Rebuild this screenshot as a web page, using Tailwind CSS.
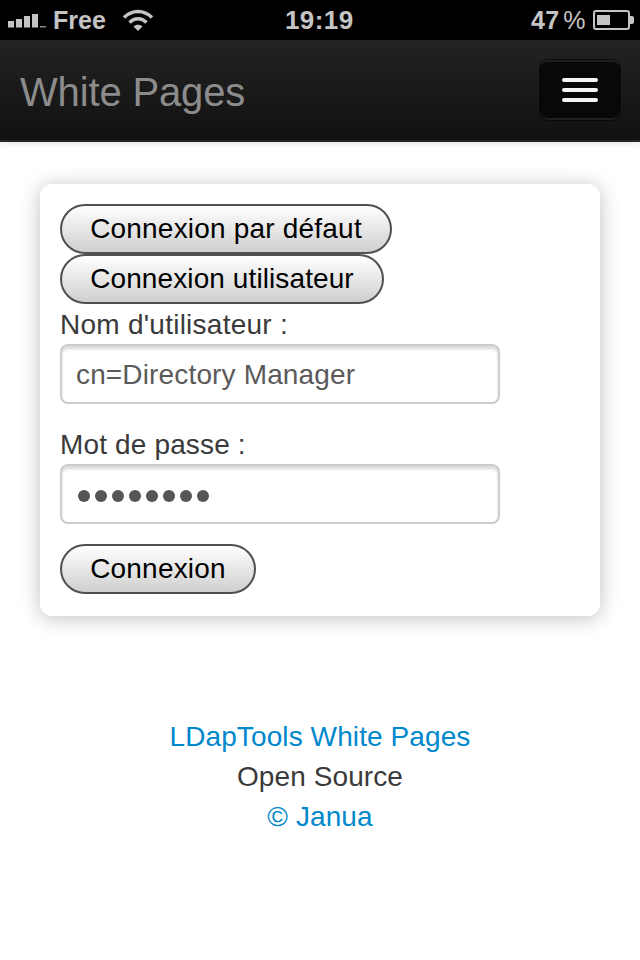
<!DOCTYPE html>
<html lang="fr">
<head>
  <meta charset="UTF-8" />
  <meta name="viewport" content="width=device-width, initial-scale=1.0" />
  <script src="https://cdn.jsdelivr.net/npm/@tailwindcss/browser@4"></script>
  <title>White Pages</title>
</head>
<body class="bg-white text-[#3a3a3a] font-['Liberation_Sans',Arial,sans-serif] text-[28px] leading-[40px] w-[640px] h-[960px] overflow-hidden">

  <!-- iOS status bar -->
  <div class="h-10 bg-black text-[#c4c4c4] font-bold flex items-center relative pl-2 pr-[6px] text-[25px]">
    <svg width="38" height="16" viewBox="0 0 38 16" class="mt-[2px]" fill="#c4c4c4">
      <rect x="0" y="8" width="6" height="6.5" />
      <rect x="8" y="6" width="6" height="8.5" />
      <rect x="16" y="3" width="6" height="11.5" />
      <rect x="24" y="1" width="6" height="13.5" />
      <rect x="32" y="13" width="6" height="1.5" fill="#8a8a8a" />
    </svg>
    <span class="ml-[7px] leading-none">Free</span>
    <svg width="32" height="24" viewBox="0 0 32 24" class="ml-[16px]" fill="none" stroke="#c4c4c4" stroke-width="3.4">
      <path d="M2 9.5 C10 1.5 22 1.5 30 9.5" />
      <path d="M7.5 14.5 C12.5 9.5 19.5 9.5 24.5 14.5" />
      <path d="M16 23 L11.5 18.5 C14 16.3 18 16.3 20.5 18.5 Z" fill="#c4c4c4" stroke="none" />
    </svg>
    <span class="absolute left-[285px] top-[2px] text-[26px] leading-[36px] tracking-[0.4px]">19:19</span>
    <div class="ml-auto flex items-center">
      <span class="leading-none tracking-[0.2px]">47</span>
      <span class="leading-none font-normal ml-[4px] tracking-[-0.5px]">%</span>
      <div class="ml-[8px] w-[37px] h-5 border-2 border-[#c4c4c4] rounded-[3px] pl-[2px] pt-[3px] mt-[-1px]">
        <div class="w-[13px] h-[10px] bg-[#c4c4c4]"></div>
      </div>
      <div class="w-1 h-2 bg-[#c4c4c4] rounded-r-[2px] mt-[-1px]"></div>
    </div>
  </div>

  <!-- Navbar -->
  <div class="h-[102px] bg-gradient-to-b from-[#232323] to-[#111] border-b-2 border-[#252525] shadow-[0_1px_8px_rgba(0,0,0,0.12)] flex items-center justify-between pl-5 pr-5">
    <span class="text-[40px] leading-none text-[#8c8c8c] mt-[4px] tracking-[-0.15px]">White Pages</span>
    <button class="w-20 h-[60px] bg-[#080808] rounded-lg border-t-2 border-t-[#1e1e1e] border-b-2 border-b-[#1f1f1f] shadow-[0_0_0_1px_#0a0a0a] flex flex-col items-center justify-center gap-[6px]">
      <span class="block w-9 h-1 bg-[#f5f5f5] rounded-sm"></span>
      <span class="block w-9 h-1 bg-[#f5f5f5] rounded-sm"></span>
      <span class="block w-9 h-1 bg-[#f5f5f5] rounded-sm"></span>
    </button>
  </div>

  <!-- Login card -->
  <div class="mt-[42px] mx-10 h-[432px] bg-white rounded-xl shadow-[0_2px_20px_rgba(0,0,0,0.25)] p-5">
    <button class="block w-[332px] h-[50px] rounded-[25px] border-2 border-[#505050] bg-gradient-to-b from-white to-[#cfcfcf] text-black leading-none tracking-[0.2px]">Connexion par défaut</button>
    <button class="block w-[324px] h-[50px] rounded-[25px] border-2 border-[#505050] bg-gradient-to-b from-white to-[#cfcfcf] text-black leading-none tracking-[0.1px]">Connexion utilisateur</button>
    <label class="block leading-[40px] pt-[1px] h-10 tracking-[0.25px]">Nom d'utilisateur :</label>
    <div class="w-[440px] h-[60px] border-2 border-[#ccc] rounded-lg shadow-[inset_0_3px_3px_rgba(0,0,0,0.15)] px-[14px] pt-[2px] flex items-center text-[#5a5a5a] tracking-[0.15px]">cn=Directory Manager</div>
    <label class="block leading-[40px] mt-5 pt-[1px] h-10 tracking-[0.15px]">Mot de passe :</label>
    <div class="w-[440px] h-[60px] border-2 border-[#ccc] rounded-lg shadow-[inset_0_3px_3px_rgba(0,0,0,0.15)] pl-4 pt-[3px] flex items-center gap-[5px]">
      <span class="w-3 h-3 rounded-full bg-[#555]"></span>
      <span class="w-3 h-3 rounded-full bg-[#555]"></span>
      <span class="w-3 h-3 rounded-full bg-[#555]"></span>
      <span class="w-3 h-3 rounded-full bg-[#555]"></span>
      <span class="w-3 h-3 rounded-full bg-[#555]"></span>
      <span class="w-3 h-3 rounded-full bg-[#555]"></span>
      <span class="w-3 h-3 rounded-full bg-[#555]"></span>
      <span class="w-3 h-3 rounded-full bg-[#555]"></span>
    </div>
    <button class="block mt-5 w-[196px] h-[50px] rounded-[25px] border-2 border-[#505050] bg-gradient-to-b from-white to-[#cfcfcf] text-black leading-none tracking-[0.2px]">Connexion</button>
  </div>

  <!-- Footer -->
  <div class="mt-[101px] text-center tracking-[0.1px]">
    <a href="#" class="block text-[#0088cc]">LDapTools White Pages</a>
    <div>Open Source</div>
    <a href="#" class="block text-[#0088cc]">© Janua</a>
  </div>
</body>
</html>
